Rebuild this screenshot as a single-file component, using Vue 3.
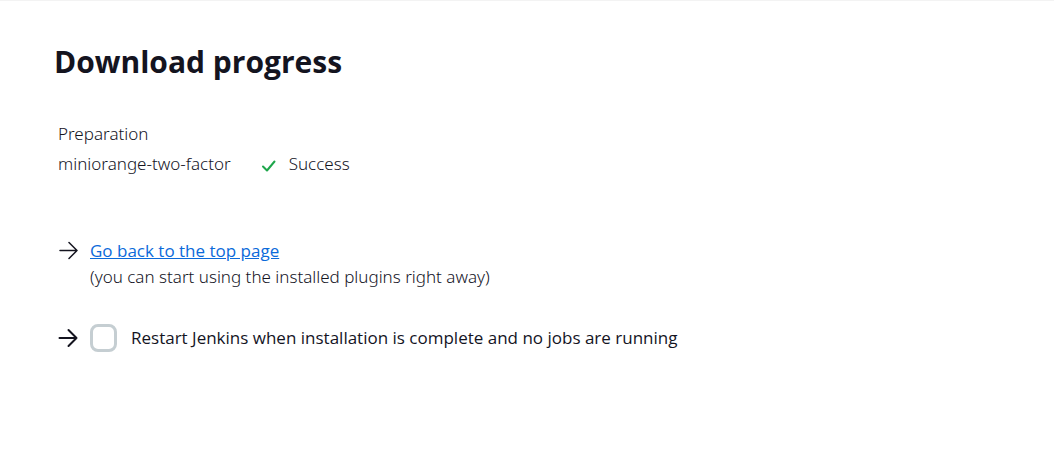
<script setup>
import { ref } from 'vue'

const restart = ref(false)
const plugins = [{ name: 'miniorange-two-factor', status: 'Success' }]
</script>

<template>
  <main class="page">
    <h1>Download progress</h1>

    <table class="progress">
      <tbody>
        <tr>
          <td>Preparation</td>
          <td></td>
        </tr>
        <tr v-for="plugin in plugins" :key="plugin.name">
          <td>{{ plugin.name }}</td>
          <td>
            <span class="status">
              <svg class="check" viewBox="0 0 16 16" aria-hidden="true"><path d="M2 10.5l4 4 7.5-9" /></svg>
              {{ plugin.status }}
            </span>
          </td>
        </tr>
      </tbody>
    </table>

    <section class="next">
      <svg class="arrow thin" viewBox="0 0 20 20" aria-hidden="true"><path d="M2 9.5h17M11 1.5l8 8-8 8" /></svg>
      <div>
        <a href="#">Go back to the top page</a>
        <p>(you can start using the installed plugins right away)</p>
      </div>
    </section>

    <section class="next restart">
      <svg class="arrow" viewBox="0 0 20 20" aria-hidden="true"><path d="M1.5 10h17M10.5 2l8 8-8 8" /></svg>
      <input id="restart" v-model="restart" type="checkbox" />
      <label for="restart">Restart Jenkins when installation is complete and no jobs are running</label>
    </section>
  </main>
</template>

<style>
body {
  background: #fff;
}
</style>

<style scoped>
.page {
  border-top: 1px solid #f3f3f3;
  padding: 40px 54px;
  color: #14141f;
  font-family: "Segoe UI", "Noto Sans", sans-serif;
  font-size: 17px;
  font-weight: 300;
  line-height: 26px;
}
h1,
a,
label {
  font-family: "Segoe UI", "Open Sans", "Noto Sans", sans-serif;
}
h1 {
  margin: 0 0 36px;
  font-size: 30px;
  line-height: 42px;
  font-weight: 700;
}
.progress {
  border-collapse: collapse;
}
.progress td {
  padding: 2px 30px 2px 4px;
  height: 26px;
}
.progress td + td {
  padding: 2px 0;
}
.status {
  display: flex;
  align-items: center;
  gap: 12px;
}
.check {
  width: 16px;
  height: 16px;
  fill: none;
  stroke: #1ea64b;
  stroke-width: 2;
  stroke-linecap: round;
  stroke-linejoin: round;
}
.next {
  display: flex;
  margin: 59px 0 0 4px;
  gap: 12px;
}
.arrow {
  flex: none;
  width: 20px;
  height: 26px;
  fill: none;
  stroke: #14141f;
  stroke-width: 2;
  stroke-linecap: round;
  stroke-linejoin: round;
}
.thin {
  stroke-width: 1.5;
}
a {
  color: #0b6ada;
  font-weight: 500;
}
p {
  margin: 0;
}
.restart {
  align-items: center;
  margin-top: 34px;
}
input {
  appearance: none;
  flex: none;
  box-sizing: border-box;
  width: 27px;
  height: 28px;
  margin: 0 2px 0 0;
  border: 3px solid #c5ced2;
  border-radius: 8px;
  background: #fff;
}
input:checked {
  background: #0b6ada;
}
label {
  font-weight: 500;
}
</style>
